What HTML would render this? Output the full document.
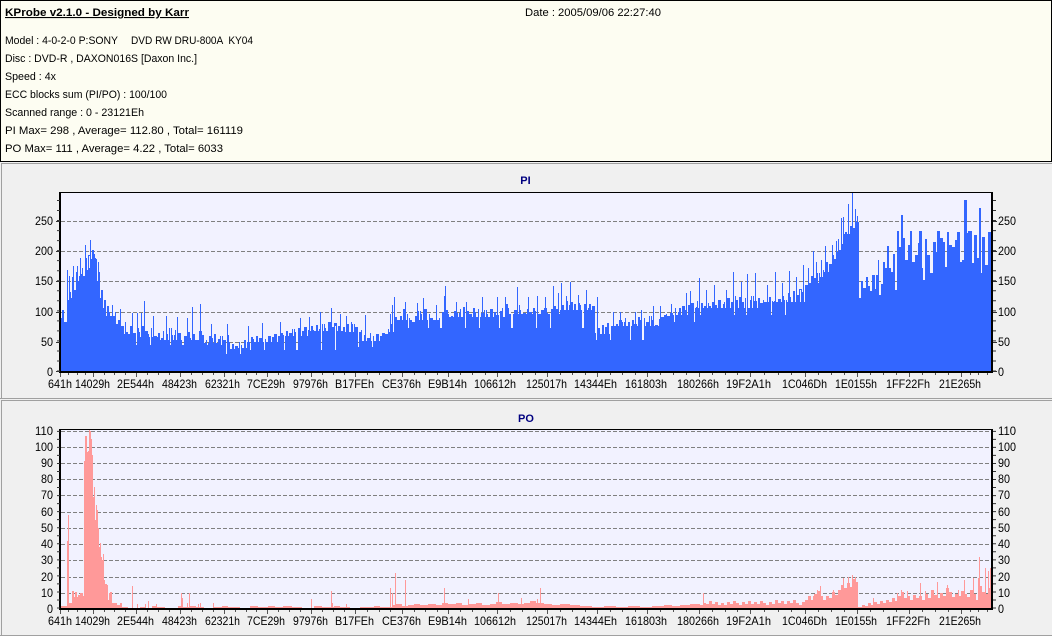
<!DOCTYPE html>
<html><head><meta charset="utf-8"><title>KProbe</title>
<style>
html,body{margin:0;padding:0;background:#f0f0f0;width:1052px;height:636px;overflow:hidden}
svg{display:block}
text{font-family:"Liberation Sans",sans-serif;white-space:pre}
.i{font-size:11px;fill:#000}
.a{font-size:12px;fill:#000}
.t{font-size:11px;font-weight:bold;fill:#000080}
</style></head><body>
<svg xmlns="http://www.w3.org/2000/svg" width="1052" height="636" viewBox="0 0 1052 636" xml:space="preserve">
<defs>
<clipPath id="c1"><rect x="61" y="192" width="930" height="180"/></clipPath>
<clipPath id="c2"><rect x="61" y="429" width="930" height="180"/></clipPath>
<mask id="m1" maskUnits="userSpaceOnUse" x="0" y="180" width="1052" height="200">
<rect x="0" y="180" width="1052" height="200" fill="#fff"/>
<path fill="none" stroke="#000" stroke-width="12" stroke-dasharray="1 3 2 2 1 4 1 2 2 3 1 5" d="M61 312H67M67 292H73M73 275H79M79 270H85M85 262H91M91 253H97M97 275H100M100 292H103M103 302H106M106 310H112M112 318H124M124 328H136M136 331H160M160 334H200M200 337H226M226 343H238M238 342H250M250 336H280M280 330H310M310 325H345M345 326H358M358 335H385M385 326H394M394 314H406M406 314H445M445 311H505M505 308H560M560 304H592M596 328H610M610 320H660M660 309H690M690 302H760M760 296H805M805 277H820M820 266H830M830 253H838M838 238H844M844 228H858"/>
<path fill="none" stroke="#000" stroke-width="24" stroke-dasharray="1 13 1 19 1 11 2 23" d="M112 320H136M136 333H226M226 342H250M250 338H345M358 335H385M394 316H592M596 328H660M660 310H700M700 303H805"/>
</mask>
</defs>
<rect width="1052" height="636" fill="#f0f0f0"/>
<rect x=".5" y=".5" width="1051" height="161" fill="#fdfdf2" stroke="#000"/>
<text class="i" x="5" y="16" textLength="184" lengthAdjust="spacingAndGlyphs" font-weight="bold" text-decoration="underline">KProbe v2.1.0 - Designed by Karr</text>
<text class="i" x="525" y="16" textLength="136" lengthAdjust="spacingAndGlyphs">Date : 2005/09/06 22:27:40</text>
<text class="i" x="5" y="44" textLength="113" lengthAdjust="spacingAndGlyphs">Model : 4-0-2-0 P:SONY</text>
<text class="i" x="131" y="44" textLength="122" lengthAdjust="spacingAndGlyphs">DVD RW DRU-800A  KY04</text>
<text class="i" x="5" y="62" textLength="192" lengthAdjust="spacingAndGlyphs">Disc : DVD-R , DAXON016S [Daxon Inc.]</text>
<text class="i" x="5" y="80" textLength="51" lengthAdjust="spacingAndGlyphs">Speed : 4x</text>
<text class="i" x="5" y="98" textLength="162" lengthAdjust="spacingAndGlyphs">ECC blocks sum (PI/PO) : 100/100</text>
<text class="i" x="5" y="116" textLength="139" lengthAdjust="spacingAndGlyphs">Scanned range : 0 - 23121Eh</text>
<text class="i" x="5" y="134" textLength="238" lengthAdjust="spacingAndGlyphs">PI Max= 298 , Average= 112.80 , Total= 161119</text>
<text class="i" x="5" y="152" textLength="218" lengthAdjust="spacingAndGlyphs">PO Max= 111 , Average= 4.22 , Total= 6033</text>

<path d="M1.5 398V163.5H1052M0 398.5H1052M1.5 635V400.5H1052M0 635.5H1052" fill="none" stroke="#a0a0a0"/>

<text class="t" x="525.5" y="184" text-anchor="middle">PI</text>
<text class="t" x="526" y="422" text-anchor="middle">PO</text>

<!-- PI plot -->
<rect x="60" y="192" width="933" height="180" fill="#f2f2ff"/>
<path d="M61 221.5H991M61 251.5H991M61 281.5H991M61 312.5H991M61 342.5H991" stroke="#808080" stroke-dasharray="4 2" fill="none"/>
<g clip-path="url(#c1)">
<g mask="url(#m1)">
<path fill="#3366ff" d="M61 372V310h3V322h3V300h3V292h3V290h3V272h3V274h3V268h3V270h3V255h3V250h3V254h3V272h3V290h3V300h3V306h3V312h3V316h3V312h3V320h3V326h3V322h3V332h3V326h3V333h3V328h3V332h3V326h3V331h3V334h3V328h3V336h3V333h3V338h3V331h3V334h3V328h3V335h3V330h3V333h3V329h3V336h3V332h3V338h3V334h3V340h3V331h3V335h3V340h3V336h3V338h3V334h3V339h3V336h3V340h3V335h3V342h3V344h3V346h3V342h3V345h3V340h3V342h3V337h3V339h3V336h3V338h3V334h3V339h3V336h3V337h3V334h3V336h3V333h3V335h3V331h3V333h3V329h3V332h3V328h3V331h3V327h3V330h3V326h3V330h3V325h3V329h3V324h3V328h3V322h3V327h3V323h3V326h3V321h3V327h3V324h3V322h3V324h3V327h3V332h3V330h3V335h3V338h3V333h3V336h3V334h3V336h3V333h3V334h3V329h3V324h3V317h3V320h3V316h3V309h3V314h3V318h3V322h3V316h3V311h3V314h3V309h3V314h3V318h3V320h3V316h3V318h3V312h3V310h3V314h3V316h3V311h3V313h3V309h3V307h3V311h3V314h3V308h3V312h3V309h3V313h3V310h3V314h3V309h3V312h3V315h3V311h3V308h3V304h3V308h3V306h3V310h3V305h3V310h3V313h3V309h3V312h3V308h3V311h3V314h3V310h3V308h3V313h3V309h3V306h3V309h3V303h3V305h3V301h3V305h3V302h3V304h3V303h3V305h3V304h3V308h3V304h3V306h3V333h3V328h3V325h3V327h3V323h3V326h3V321h3V324h3V320h3V322h3V318h3V322h3V320h3V324h3V317h3V320h3V318h3V322h3V316h3V320h3V325h3V319h3V317h3V314h3V316h3V313h3V308h3V312h3V308h3V306h3V310h3V305h3V303h3V307h3V301h3V303h3V306h3V303h3V306h3V302h3V305h3V300h3V304h3V302h3V298h3V302h3V296h3V300h3V297h3V302h3V298h3V300h3V296h3V301h3V298h3V303h3V300h3V302h3V297h3V301h3V294h3V299h3V296h3V300h3V293h3V297h3V291h3V295h3V289h3V292h3V285h3V281h3V276h3V278h3V273h3V277h3V270h3V262h3V264h3V255h3V252h3V250h3V240h3V232h3V234h3V226h3V228h3V222H859V372z"/>
</g>
<path fill="#3366ff" d="M858 372V296H859V298H861V281H863V288H866V277H868V286H870V291H872V275H875V289H876V275H878V260H879V295H881V284H883V262H885V268H887V246H889V268H891V272H893V254H895V290H897V231H899V247H901V215H903V238H905V260H908V245H910V231H912V262H915V255H918V243H919V231H922V268H923V280H925V239H927V255H930V273H933V242H936V252H937V231H940V238H943V242H945V267H947V232H949V245H952V247H955V240H957V232H960V262H962V260H964V200H967V233H968V231H972V263H974V235H977V258H979V208H981V273H982V237H985V265H988V232H991V250H993V372z"/>
<path stroke="#3366ff" fill="none" d="M62.5 372V311M67.5 372V270M69.5 372V276M72.5 372V277M73.5 372V266M77.5 372V266M80.5 372V258M85.5 372V245M86.5 372V258M90.5 372V240M95.5 372V258M98.5 372V262M112.5 372V305M120.5 372V309M132.5 372V313M137.5 372V313M141.5 372V313M144.5 372V301M153.5 372V316M166.5 372V316M177.5 372V317M187.5 372V318M192.5 372V307M200.5 372V304M211.5 372V324M227.5 372V324M248.5 372V326M262.5 372V323M280.5 372V322M300.5 372V318M309.5 372V317M320.5 372V312M331.5 372V308M340.5 372V314M346.5 372V316M365.5 372V315M390.5 372V314M392.5 372V305M394.5 372V297M405.5 372V302M417.5 372V303M423.5 372V298M436.5 372V305M444.5 372V296M445.5 372V286M456.5 372V302M466.5 372V302M482.5 372V297M497.5 372V297M505.5 372V297M517.5 372V287M528.5 372V297M537.5 372V296M545.5 372V297M553.5 372V286M558.5 372V293M561.5 372V283M566.5 372V296M570.5 372V282M578.5 372V295M586.5 372V290M597.5 372V297M613.5 372V312M620.5 372V312M635.5 372V312M641.5 372V310M653.5 372V306M660.5 372V306M671.5 372V304M686.5 372V293M690.5 372V291M699.5 372V278M706.5 372V290M714.5 372V285M726.5 372V290M733.5 372V272M741.5 372V282M747.5 372V274M755.5 372V273M767.5 372V285M775.5 372V272M782.5 372V283M789.5 372V271M796.5 372V277M803.5 372V265M808.5 372V268M813.5 372V251M816.5 372V262M821.5 372V260M825.5 372V246M832.5 372V245M836.5 372V241M838.5 372V239M841.5 372V218M843.5 372V217M848.5 372V204M852.5 372V192M855.5 372V209M857.5 372V216"/>
</g>
<path d="M60 192.5H992M60 371.5H992" stroke="#000" fill="none"/>
<path d="M60 192V373M992 192V373" stroke="#000" stroke-width="2" fill="none"/>
<path d="M60 372.5H992" stroke="#000" fill="none"/>
<g id="bt" stroke="#555" fill="none"><path d="M60.5 373v4M93.5 373v4M136.5 373v4M180.5 373v4M224.5 373v4M267.5 373v4M311.5 373v4M355.5 373v4M402.5 373v4M448.5 373v4M497.5 373v4M547.5 373v4M597.5 373v4M647.5 373v4M699.5 373v4M750.5 373v4M805.5 373v4M857.5 373v4M909.5 373v4M961.5 373v4M68.5 373v2M77.5 373v2M85.5 373v2M104.5 373v2M114.5 373v2M125.5 373v2M147.5 373v2M158.5 373v2M169.5 373v2M191.5 373v2M202.5 373v2M213.5 373v2M235.5 373v2M246.5 373v2M256.5 373v2M278.5 373v2M289.5 373v2M300.5 373v2M322.5 373v2M333.5 373v2M344.5 373v2M367.5 373v2M379.5 373v2M390.5 373v2M414.5 373v2M425.5 373v2M437.5 373v2M460.5 373v2M472.5 373v2M485.5 373v2M510.5 373v2M522.5 373v2M535.5 373v2M560.5 373v2M572.5 373v2M585.5 373v2M610.5 373v2M622.5 373v2M635.5 373v2M660.5 373v2M673.5 373v2M686.5 373v2M712.5 373v2M725.5 373v2M737.5 373v2M764.5 373v2M778.5 373v2M791.5 373v2M818.5 373v2M831.5 373v2M844.5 373v2M870.5 373v2M883.5 373v2M896.5 373v2M922.5 373v2M935.5 373v2M948.5 373v2M970.5 373v2M978.5 373v2M987.5 373v2"/></g>
<path d="M58.5 371.5V192" stroke="#333" stroke-width="3" stroke-dasharray="1 9.03" fill="none"/>
<path d="M994.5 371.5V192" stroke="#333" stroke-width="3" stroke-dasharray="1 9.03" fill="none"/>
<path d="M56 221.5h4M56 251.5h4M56 281.5h4M56 312.5h4M56 342.5h4M56 371.5h4M993 221.5h4M993 251.5h4M993 281.5h4M993 312.5h4M993 342.5h4M993 371.5h4" stroke="#333" fill="none"/>

<text class="a" x="35" y="225" textLength="18" lengthAdjust="spacingAndGlyphs">250</text>
<text class="a" x="35" y="255" textLength="18" lengthAdjust="spacingAndGlyphs">200</text>
<text class="a" x="35" y="285" textLength="18" lengthAdjust="spacingAndGlyphs">150</text>
<text class="a" x="35" y="316" textLength="18" lengthAdjust="spacingAndGlyphs">100</text>
<text class="a" x="41" y="346" textLength="12" lengthAdjust="spacingAndGlyphs">50</text>
<text class="a" x="47" y="376" textLength="6" lengthAdjust="spacingAndGlyphs">0</text>
<text class="a" x="998" y="225" textLength="18" lengthAdjust="spacingAndGlyphs">250</text>
<text class="a" x="998" y="255" textLength="18" lengthAdjust="spacingAndGlyphs">200</text>
<text class="a" x="998" y="285" textLength="18" lengthAdjust="spacingAndGlyphs">150</text>
<text class="a" x="998" y="316" textLength="18" lengthAdjust="spacingAndGlyphs">100</text>
<text class="a" x="998" y="346" textLength="12" lengthAdjust="spacingAndGlyphs">50</text>
<text class="a" x="998" y="376" textLength="6" lengthAdjust="spacingAndGlyphs">0</text>

<g>
<text class="a" x="48" y="388" textLength="24" lengthAdjust="spacingAndGlyphs">641h</text>
<text class="a" x="75" y="388" textLength="35" lengthAdjust="spacingAndGlyphs">14029h</text>
<text class="a" x="117" y="388" textLength="37" lengthAdjust="spacingAndGlyphs">2E544h</text>
<text class="a" x="162" y="388" textLength="35" lengthAdjust="spacingAndGlyphs">48423h</text>
<text class="a" x="205" y="388" textLength="35" lengthAdjust="spacingAndGlyphs">62321h</text>
<text class="a" x="247" y="388" textLength="38" lengthAdjust="spacingAndGlyphs">7CE29h</text>
<text class="a" x="293" y="388" textLength="35" lengthAdjust="spacingAndGlyphs">97976h</text>
<text class="a" x="335" y="388" textLength="39" lengthAdjust="spacingAndGlyphs">B17FEh</text>
<text class="a" x="382" y="388" textLength="39" lengthAdjust="spacingAndGlyphs">CE376h</text>
<text class="a" x="428" y="388" textLength="39" lengthAdjust="spacingAndGlyphs">E9B14h</text>
<text class="a" x="474" y="388" textLength="42" lengthAdjust="spacingAndGlyphs">106612h</text>
<text class="a" x="526" y="388" textLength="41" lengthAdjust="spacingAndGlyphs">125017h</text>
<text class="a" x="574" y="388" textLength="43" lengthAdjust="spacingAndGlyphs">14344Eh</text>
<text class="a" x="625" y="388" textLength="42" lengthAdjust="spacingAndGlyphs">161803h</text>
<text class="a" x="677" y="388" textLength="42" lengthAdjust="spacingAndGlyphs">180266h</text>
<text class="a" x="726" y="388" textLength="45" lengthAdjust="spacingAndGlyphs">19F2A1h</text>
<text class="a" x="782" y="388" textLength="45" lengthAdjust="spacingAndGlyphs">1C046Dh</text>
<text class="a" x="835" y="388" textLength="42" lengthAdjust="spacingAndGlyphs">1E0155h</text>
<text class="a" x="886" y="388" textLength="44" lengthAdjust="spacingAndGlyphs">1FF22Fh</text>
<text class="a" x="939" y="388" textLength="42" lengthAdjust="spacingAndGlyphs">21E265h</text>
</g>

<!-- PO plot -->
<rect x="60" y="429" width="933" height="180" fill="#f2f2ff"/>
<path d="M61 431.5H991M61 447.5H991M61 463.5H991M61 479.5H991M61 495.5H991M61 512.5H991M61 528.5H991M61 544.5H991M61 560.5H991M61 577.5H991M61 593.5H991" stroke="#808080" stroke-dasharray="4 2" fill="none"/>
<g clip-path="url(#c2)">
<path fill="#ff9999" d="M61 609V606H68V603H72V591H74V597H75V592H77V597H78V595H80V593H83V596H84V461H85V436H87V452H88V451H89V430H90V431H91V439H92V455H93V497H94V487H95V520H96V505H97V510H98V528H99V547H100V543H101V557H102V560H103V554H104V580H105V584H107V585H108V600H109V593H110V592H112V603H117V605H120V603H122V607H128V608H140V607H146V608H152V606H156V607H165V608H178V606H183V607H190V606H196V607H204V608H214V607H222V606H228V607H240V608H250V606H258V607H268V606H275V607H283V606H292V607H302V608H314V606H322V607H334V606H340V607H350V608H360V607H374V606H380V607H392V605H396V604H402V606H408V605H414V604H420V605H428V604H436V605H442V603H448V604H456V603H462V605H468V604H476V603H482V605H490V604H496V602H502V604H510V603H518V604H524V603H530V601H536V603H544V604H552V605H560V604H570V605H580V606H592V607H604V606H616V607H628V606H640V607H652V606H664V605H672V606H680V605H690V604H700V605H703V603H706V604H709V601H712V604H715V602H718V605H721V603H724V605H727V602H730V604H733V601H736V603H739V605H742V602H745V604H748V601H751V604H754V602H757V604H760V601H763V603H766V605H769V602H772V604H775V600H778V603H781V601H784V604H787V601H790V603H793V600H796V603H799V605H802V602H805V600H808V596H811V600H814V594H817V591H820V596H823V600H826V596H829V598H832V592H835V595H838V590H841V585H844V588H847V583H850V587H853V579H856V582H858V607H862V605H865V606H868V603H871V605H874V602H877V604H880V601H883V603H886V600H889V602H892V598H895V601H898V596H901V592H904V598H907V596H910V600H913V595H916V598H919V596H922V600H925V594H928V598H931V590H934V595H937V598H940V593H943V596H946V588H949V592H952V597H955V594H958V596H961V591H964V594H967V597H970V590H973V594H976V600H979V586H982V592H985V594H988V588H991V600H993V609z"/>
<path stroke="#ff9999" fill="none" d="M67.5 609V541M68.5 609V515M132.5 609V586M137.5 609V604M145.5 609V604M148.5 609V601M156.5 609V604M181.5 609V593M182.5 609V598M187.5 609V603M189.5 609V593M198.5 609V604M200.5 609V603M213.5 609V603M311.5 609V599M331.5 609V591M332.5 609V603M346.5 609V604M390.5 609V588M392.5 609V593M395.5 609V573M405.5 609V580M444.5 609V588M468.5 609V599M498.5 609V593M521.5 609V598M537.5 609V599M540.5 609V588M703.5 609V593M813.5 609V596M817.5 609V590M820.5 609V586M833.5 609V590M843.5 609V578M848.5 609V577M852.5 609V575M855.5 609V577M873.5 609V598M897.5 609V593M901.5 609V590M907.5 609V591M920.5 609V583M925.5 609V591M937.5 609V582M947.5 609V585M958.5 609V590M964.5 609V580M973.5 609V578M978.5 609V578M979.5 609V557M985.5 609V568M988.5 609V571M990.5 609V568"/>
</g>
<path d="M60 429.5H992M60 608.5H992M60 609.5H992" stroke="#000" fill="none"/>
<path d="M60 429V610M992 429V610" stroke="#000" stroke-width="2" fill="none"/>
<use href="#bt" transform="translate(0 237)"/>
<path d="M58.5 608.5V430" stroke="#333" stroke-width="3" stroke-dasharray="1 7.03" fill="none"/>
<path d="M994.5 608.5V430" stroke="#333" stroke-width="3" stroke-dasharray="1 7.03" fill="none"/>

<text class="a" x="35" y="435" textLength="18" lengthAdjust="spacingAndGlyphs">110</text>
<text class="a" x="35" y="451" textLength="18" lengthAdjust="spacingAndGlyphs">100</text>
<text class="a" x="41" y="467" textLength="12" lengthAdjust="spacingAndGlyphs">90</text>
<text class="a" x="41" y="483" textLength="12" lengthAdjust="spacingAndGlyphs">80</text>
<text class="a" x="41" y="499" textLength="12" lengthAdjust="spacingAndGlyphs">70</text>
<text class="a" x="41" y="516" textLength="12" lengthAdjust="spacingAndGlyphs">60</text>
<text class="a" x="41" y="532" textLength="12" lengthAdjust="spacingAndGlyphs">50</text>
<text class="a" x="41" y="548" textLength="12" lengthAdjust="spacingAndGlyphs">40</text>
<text class="a" x="41" y="564" textLength="12" lengthAdjust="spacingAndGlyphs">30</text>
<text class="a" x="41" y="581" textLength="12" lengthAdjust="spacingAndGlyphs">20</text>
<text class="a" x="41" y="597" textLength="12" lengthAdjust="spacingAndGlyphs">10</text>
<text class="a" x="47" y="613" textLength="6" lengthAdjust="spacingAndGlyphs">0</text>
<text class="a" x="998" y="435" textLength="18" lengthAdjust="spacingAndGlyphs">110</text>
<text class="a" x="998" y="451" textLength="18" lengthAdjust="spacingAndGlyphs">100</text>
<text class="a" x="998" y="467" textLength="12" lengthAdjust="spacingAndGlyphs">90</text>
<text class="a" x="998" y="483" textLength="12" lengthAdjust="spacingAndGlyphs">80</text>
<text class="a" x="998" y="499" textLength="12" lengthAdjust="spacingAndGlyphs">70</text>
<text class="a" x="998" y="516" textLength="12" lengthAdjust="spacingAndGlyphs">60</text>
<text class="a" x="998" y="532" textLength="12" lengthAdjust="spacingAndGlyphs">50</text>
<text class="a" x="998" y="548" textLength="12" lengthAdjust="spacingAndGlyphs">40</text>
<text class="a" x="998" y="564" textLength="12" lengthAdjust="spacingAndGlyphs">30</text>
<text class="a" x="998" y="581" textLength="12" lengthAdjust="spacingAndGlyphs">20</text>
<text class="a" x="998" y="597" textLength="12" lengthAdjust="spacingAndGlyphs">10</text>
<text class="a" x="998" y="613" textLength="6" lengthAdjust="spacingAndGlyphs">0</text>

<g>
<text class="a" x="48" y="625" textLength="24" lengthAdjust="spacingAndGlyphs">641h</text>
<text class="a" x="75" y="625" textLength="35" lengthAdjust="spacingAndGlyphs">14029h</text>
<text class="a" x="117" y="625" textLength="37" lengthAdjust="spacingAndGlyphs">2E544h</text>
<text class="a" x="162" y="625" textLength="35" lengthAdjust="spacingAndGlyphs">48423h</text>
<text class="a" x="205" y="625" textLength="35" lengthAdjust="spacingAndGlyphs">62321h</text>
<text class="a" x="247" y="625" textLength="38" lengthAdjust="spacingAndGlyphs">7CE29h</text>
<text class="a" x="293" y="625" textLength="35" lengthAdjust="spacingAndGlyphs">97976h</text>
<text class="a" x="335" y="625" textLength="39" lengthAdjust="spacingAndGlyphs">B17FEh</text>
<text class="a" x="382" y="625" textLength="39" lengthAdjust="spacingAndGlyphs">CE376h</text>
<text class="a" x="428" y="625" textLength="39" lengthAdjust="spacingAndGlyphs">E9B14h</text>
<text class="a" x="474" y="625" textLength="42" lengthAdjust="spacingAndGlyphs">106612h</text>
<text class="a" x="526" y="625" textLength="41" lengthAdjust="spacingAndGlyphs">125017h</text>
<text class="a" x="574" y="625" textLength="43" lengthAdjust="spacingAndGlyphs">14344Eh</text>
<text class="a" x="625" y="625" textLength="42" lengthAdjust="spacingAndGlyphs">161803h</text>
<text class="a" x="677" y="625" textLength="42" lengthAdjust="spacingAndGlyphs">180266h</text>
<text class="a" x="726" y="625" textLength="45" lengthAdjust="spacingAndGlyphs">19F2A1h</text>
<text class="a" x="782" y="625" textLength="45" lengthAdjust="spacingAndGlyphs">1C046Dh</text>
<text class="a" x="835" y="625" textLength="42" lengthAdjust="spacingAndGlyphs">1E0155h</text>
<text class="a" x="886" y="625" textLength="44" lengthAdjust="spacingAndGlyphs">1FF22Fh</text>
<text class="a" x="939" y="625" textLength="42" lengthAdjust="spacingAndGlyphs">21E265h</text>
</g>
</svg>
</body></html>
